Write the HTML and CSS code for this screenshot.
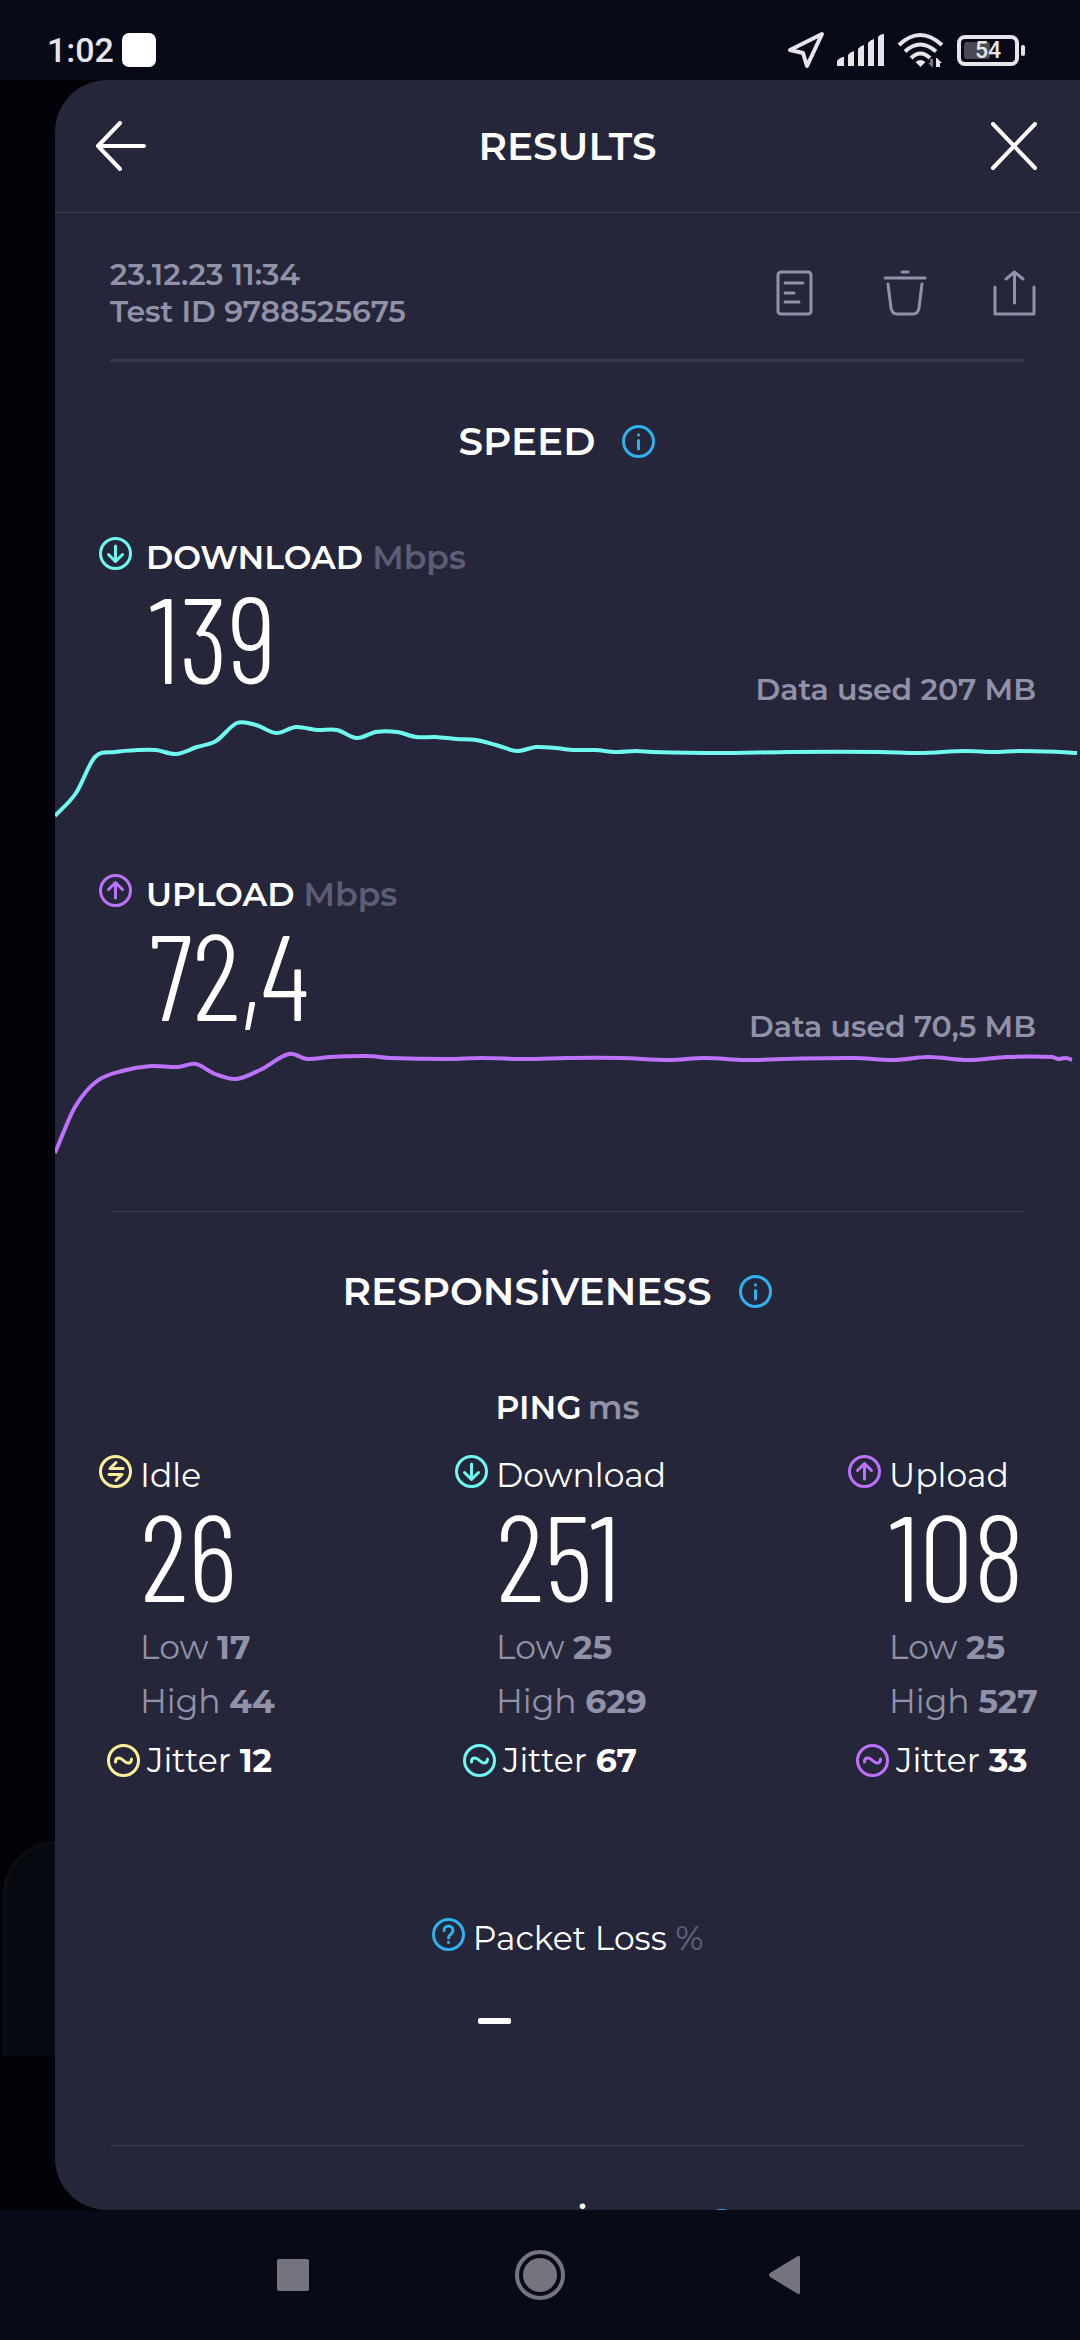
FILE: index.html
```html
<!DOCTYPE html>
<html lang="en">
  <head>
    <meta charset="UTF-8" />
    <meta name="viewport" content="width=device-width, initial-scale=1.0" />
    <title>Results</title>
    <link rel="stylesheet" href="styles.css">
  </head>
  <body>
    <svg class="sprite" aria-hidden="true">
      <symbol id="icon-down" viewBox="0 0 33 33">
        <circle cx="16.5" cy="16.5" r="15" />
        <path d="M16.5 9v15M9.5 17.5l7 7 7-7" />
      </symbol>
      <symbol id="icon-up" viewBox="0 0 33 33">
        <circle cx="16.5" cy="16.5" r="15" />
        <path d="M16.5 24V9M9.5 15.5l7-7 7 7" />
      </symbol>
      <symbol id="icon-idle" viewBox="0 0 33 33">
        <circle cx="16.5" cy="16.5" r="15" />
        <path d="M24 13.5H11l6-6M10 19.5h13l-6 6" />
      </symbol>
      <symbol id="icon-jitter" viewBox="0 0 33 33">
        <circle cx="16.5" cy="16.5" r="15" />
        <path d="M8.5 18c0-5 4.5-5 8-1.5s8 3.5 8-1.5" />
      </symbol>
      <symbol id="icon-info" viewBox="0 0 33 33">
        <circle cx="16.5" cy="16.5" r="15" />
        <path d="M16.5 15.5v8.5M16.5 9.8v.2" />
      </symbol>
      <symbol id="icon-help" viewBox="0 0 33 33">
        <circle cx="16.5" cy="16.5" r="15" />
        <path d="M12 12.5c0-6 9-6 9 0 0 4-4.5 3.5-4.5 7.5M16.5 24.2v.2" />
      </symbol>
    </svg>

    <div class="status-bar">
      <div class="status-left">
        <span class="time">1:02</span>
        <span class="notification"></span>
      </div>
      <div class="status-right">
        <svg width="38" height="38" viewBox="0 0 38 38" fill="none" stroke="#e6e6ea" stroke-width="4" stroke-linejoin="round"><path d="M35 3L3 19l13 3 4 13z" /></svg>
        <svg width="48" height="32" viewBox="0 0 48 32" fill="#e6e6ea">
          <path d="M0 32v-5q3-4 7-4v9zM11 32V21q2-3 6-4v15zM21 32V15q2-3 6-4v21zM31 32V9q2-3 6-4v27zM41 32V3q2-3 6-3v32z" />
        </svg>
        <svg width="48" height="36" viewBox="0 0 48 36" fill="none" stroke="#e6e6ea" stroke-width="4">
          <path d="M2 13q21-20 43 0M8 19.5q15-14 31 0M14 26q9.5-9 19 0" />
          <path d="M18.5 30q5-4 10 0l-5 5z" fill="#e6e6ea" stroke="none" />
          <path d="M36 27v8h-1l-4-4h2v-4z" fill="#77777f" stroke="none" />
          <path d="M39 35v-9h1l5 5h-2v4z" fill="#e6e6ea" stroke="none" />
        </svg>
        <span class="battery"><span class="battery-level" style="width: 54%"></span><span class="battery-text">54</span></span>
      </div>
    </div>

    <div class="stage">
      <div class="behind-card"></div>
      <main class="sheet">
        <header class="sheet-header">
          <button type="button" class="icon-btn" aria-label="Back">
            <svg width="50" height="50" viewBox="0 0 50 50" class="line-white"><path d="M24 2L2 25l22 23M2 25h46" /></svg>
          </button>
          <h1>RESULTS</h1>
          <button type="button" class="icon-btn" aria-label="Close">
            <svg width="46" height="48" viewBox="0 0 46 48" class="line-white"><path d="M2 2l42 44M44 2L2 46" /></svg>
          </button>
        </header>

        <section class="meta">
          <div class="meta-text">
            <div>23.12.23 11:34</div>
            <div>Test ID 9788525675</div>
          </div>
          <div class="meta-actions">
            <button type="button" class="icon-btn" aria-label="Details">
              <svg width="44" height="46" viewBox="0 0 44 46" class="line-muted"><rect x="5" y="2" width="33" height="42" rx="3" /><path d="M12 13h18M12 23h9M12 32h14" /></svg>
            </button>
            <button type="button" class="icon-btn" aria-label="Delete">
              <svg width="44" height="46" viewBox="0 0 44 46" class="line-muted"><path d="M19 2h6M2 8h40M5 14l3 24q1 6 6 6h16q5 0 6-6l3-24" /></svg>
            </button>
            <button type="button" class="icon-btn" aria-label="Share">
              <svg width="44" height="46" viewBox="0 0 44 46" class="line-muted"><path d="M2 17v27h39V17M21.5 33V2M13 9l8.5-7 8.5 7" /></svg>
            </button>
          </div>
        </section>
        <hr class="thick">

        <h2>SPEED <svg class="icon info"><use href="#icon-info" /></svg></h2>

        <section class="metric download">
          <div class="metric-title">
            <svg class="icon"><use href="#icon-down" /></svg>
            <h3>DOWNLOAD <span class="unit">Mbps</span></h3>
          </div>
          <div class="metric-row">
            <span class="value">139</span>
            <span class="data-used">Data used 207 MB</span>
          </div>
          <svg class="chart" viewBox="0 0 1025 120" preserveAspectRatio="none"><path id="download-line" /></svg>
        </section>

        <section class="metric upload">
          <div class="metric-title">
            <svg class="icon"><use href="#icon-up" /></svg>
            <h3>UPLOAD <span class="unit">Mbps</span></h3>
          </div>
          <div class="metric-row">
            <span class="value">72,4</span>
            <span class="data-used">Data used 70,5 MB</span>
          </div>
          <svg class="chart" viewBox="0 0 1025 120" preserveAspectRatio="none"><path id="upload-line" /></svg>
        </section>
        <hr>

        <h2>RESPONSİVENESS <svg class="icon info"><use href="#icon-info" /></svg></h2>

        <h3 class="ping-title">PING<span class="ms">ms</span></h3>
        <section class="ping">
          <div class="ping-col idle">
            <div class="ping-label"><svg class="icon"><use href="#icon-idle" /></svg>Idle</div>
            <div class="value">26</div>
            <div class="range">Low <b>17</b></div>
            <div class="range">High <b>44</b></div>
            <div class="jitter"><svg class="icon"><use href="#icon-jitter" /></svg><span>Jitter <b>12</b></span></div>
          </div>
          <div class="ping-col download">
            <div class="ping-label"><svg class="icon"><use href="#icon-down" /></svg>Download</div>
            <div class="value">251</div>
            <div class="range">Low <b>25</b></div>
            <div class="range">High <b>629</b></div>
            <div class="jitter"><svg class="icon"><use href="#icon-jitter" /></svg><span>Jitter <b>67</b></span></div>
          </div>
          <div class="ping-col upload">
            <div class="ping-label"><svg class="icon"><use href="#icon-up" /></svg>Upload</div>
            <div class="value">108</div>
            <div class="range">Low <b>25</b></div>
            <div class="range">High <b>527</b></div>
            <div class="jitter"><svg class="icon"><use href="#icon-jitter" /></svg><span>Jitter <b>33</b></span></div>
          </div>
        </section>

        <section class="packet-loss">
          <div class="ping-label"><svg class="icon info"><use href="#icon-help" /></svg><span>Packet Loss <span class="unit">%</span></span></div>
          <div class="no-value"></div>
        </section>
        <hr>

        <h2>CONNECTİONS <svg class="icon info"><use href="#icon-info" /></svg></h2>
      </main>
    </div>

    <nav class="nav-bar">
      <button type="button" class="icon-btn" aria-label="Recent apps">
        <svg width="50" height="50" viewBox="0 0 50 50"><rect x="9" y="9" width="32" height="32" rx="2" /></svg>
      </button>
      <button type="button" class="icon-btn" aria-label="Home">
        <svg width="50" height="50" viewBox="0 0 50 50"><circle cx="25" cy="25" r="17" /><circle cx="25" cy="25" r="23" fill="none" stroke="#74747d" stroke-width="4" /></svg>
      </button>
      <button type="button" class="icon-btn" aria-label="Go back">
        <svg width="50" height="50" viewBox="0 0 50 50"><path d="M36 6q2-1 2 2v34q0 3-2 2L8 27q-2-2 0-4z" /></svg>
      </button>
    </nav>

    <script src="script.js"></script>
  </body>
</html>
```
FILE: styles.css
```css
* {
  box-sizing: border-box;
}
body {
  margin: 0;
  height: 100vh;
  display: flex;
  flex-direction: column;
  background: #080a18;
  color: #fff;
  font-family: Montserrat, Inter, sans-serif;
  font-size: 33px;
  line-height: 40px;
}
h1,
h2,
h3 {
  margin: 0;
  font-weight: 600;
}
.sprite {
  display: none;
}
.icon-btn {
  display: flex;
  padding: 0;
  border: 0;
  background: none;
}

/* status bar */
.status-bar {
  flex: none;
  height: 80px;
  padding: 20px 55px 0 47px;
  display: flex;
  justify-content: space-between;
  align-items: center;
}
.status-left,
.status-right {
  display: flex;
  align-items: center;
}
.status-left {
  gap: 8px;
}
.status-right {
  gap: 12px;
}
.time {
  font-family: Roboto, sans-serif;
  font-size: 34px;
  font-weight: 500;
  color: #e6e6ea;
}
.notification {
  width: 34px;
  height: 34px;
  border-radius: 7px;
  background: #fff;
}
.battery {
  position: relative;
  width: 62px;
  height: 31px;
  padding: 3px;
  border: 4px solid #e6e6ea;
  border-radius: 8px;
  margin-right: 6px;
}
.battery::after {
  content: "";
  position: absolute;
  right: -10px;
  top: 6px;
  width: 4px;
  height: 11px;
  border-radius: 2px;
  background: #e6e6ea;
}
.battery-level {
  display: block;
  height: 100%;
  border-radius: 3px;
  background: #4a4a54;
}
.battery-text {
  position: absolute;
  inset: 0;
  text-align: center;
  font-family: Roboto, sans-serif;
  font-size: 23px;
  font-weight: 500;
  line-height: 24px;
  color: #e6e6ea;
}

/* results sheet */
.stage {
  position: relative;
  flex: 1;
  min-height: 0;
  padding-left: 55px;
  background: #020308;
}
.behind-card {
  position: absolute;
  left: 3px;
  bottom: 154px;
  width: 104px;
  height: 215px;
  border: 3px solid #0d0e12;
  border-bottom: 0;
  border-radius: 54px 0 0 0;
  background: #070911;
}
.sheet {
  position: relative;
  height: 100%;
  overflow: hidden;
  border-radius: 52px 0 0 52px;
  background: #25263a;
}
.sheet-header {
  display: grid;
  grid-template-columns: 50px 1fr 50px;
  align-items: center;
  justify-items: center;
  height: 133px;
  padding: 0 41px;
  border-bottom: 1px solid #38394e;
}
h1,
h2 {
  font-size: 39px;
  line-height: 48px;
}
.line-white,
.line-muted {
  fill: none;
  stroke: #fff;
  stroke-width: 4;
  stroke-linecap: round;
  stroke-linejoin: round;
}
.line-muted {
  stroke: #9192a8;
  stroke-width: 3;
}
.meta {
  display: flex;
  justify-content: space-between;
  align-items: center;
  padding: 43px 43px 29px 55px;
  color: #9192a8;
}
.meta-text,
.data-used {
  font-size: 30px;
  font-weight: 600;
  line-height: 37px;
}
.meta-actions {
  display: flex;
  gap: 66px;
}
hr {
  height: 1px;
  margin: 0 55px;
  border: 0;
  background: #38394e;
}
hr.thick {
  height: 3px;
}
h2 {
  display: flex;
  justify-content: center;
  align-items: center;
  gap: 27px;
  margin-top: 55px;
  padding-right: 21px;
}
h3 {
  font-size: 33px;
}
.icon {
  flex: none;
  width: 33px;
  height: 33px;
  fill: none;
  stroke: currentColor;
  stroke-width: 3;
  stroke-linecap: round;
  stroke-linejoin: round;
}
.download .icon {
  color: #6ff9ef;
}
.upload .icon {
  color: #bc72fb;
}
.idle .icon {
  color: #fdf09a;
}
.icon.info {
  color: #2fb1ee;
}
.unit {
  color: #5d5e74;
}

/* speed */
.metric {
  margin-bottom: 46px;
}
h2 + .metric {
  margin-top: 72px;
}
.metric-title {
  display: flex;
  gap: 14px;
  padding-left: 44px;
}
.metric-row {
  display: flex;
  justify-content: space-between;
  align-items: flex-end;
  margin-top: 14px;
  padding: 0 44px 0 94px;
}
.metric-row .value {
  padding-bottom: 29px;
}
.value {
  font-family: "Barlow Condensed", "Roboto Condensed", sans-serif;
  font-size: 122px;
  font-weight: 300;
  line-height: 88px;
}
.data-used {
  color: #9192a8;
}
.chart {
  display: block;
  width: 100%;
  height: 120px;
  fill: none;
  stroke-width: 4;
}
.download .chart {
  stroke: #6ff9ef;
}
.upload .chart {
  stroke: #bc72fb;
}

/* responsiveness */
.ping-title {
  display: flex;
  justify-content: center;
  gap: 6px;
  margin-top: 72px;
}
.ms {
  color: #9192a8;
}
.ping {
  display: grid;
  grid-template-columns: minmax(0, 356fr) minmax(0, 393fr) minmax(0, 188fr);
  margin-top: 28px;
  padding: 0 44px;
}
.ping-label {
  display: flex;
  gap: 8px;
}
.ping-col .value {
  margin: 14px 0 23px;
  padding-left: 41px;
}
.range {
  padding-left: 41px;
  line-height: 54px;
  white-space: nowrap;
  color: #9192a8;
}
.jitter {
  display: flex;
  align-items: center;
  gap: 7px;
  margin-top: 12px;
  padding-left: 8px;
  white-space: nowrap;
}
.packet-loss {
  width: fit-content;
  margin: 138px auto 121px;
}
.packet-loss .unit {
  font-weight: 500;
}
.no-value {
  width: 33px;
  height: 6px;
  margin: 60px 0 0 46px;
  border-radius: 2px;
  background: #fff;
}

/* navigation bar */
.nav-bar {
  flex: none;
  height: 130px;
  display: flex;
  justify-content: center;
  align-items: center;
  gap: 197px;
}
.nav-bar svg {
  fill: #74747d;
}
```
FILE: script.js
```js
const downloadPoints = [
  [0, 108], [21, 85], [40, 49], [60, 44], [83, 42], [101, 42], [121, 46],
  [142, 39], [161, 33], [182, 15], [201, 17], [221, 25], [241, 19], [262, 22],
  [282, 22], [302, 30], [321, 24], [342, 24], [361, 29], [381, 29], [401, 31],
  [421, 32], [441, 37], [462, 43], [481, 39], [500, 40], [520, 42], [540, 42],
  [561, 44], [581, 43], [597, 44], [663, 45], [735, 44], [825, 44], [865, 45],
  [910, 43], [939, 44], [965, 43], [1005, 44], [1022, 45],
];

const uploadPoints = [
  [0, 108], [20, 62], [42, 36], [67, 26], [96, 21], [123, 22], [141, 19],
  [160, 29], [181, 34], [205, 25], [234, 9], [252, 14], [275, 12], [312, 11],
  [336, 13], [393, 14], [426, 13], [471, 14], [512, 13], [565, 13], [614, 15],
  [650, 13], [690, 15], [728, 14], [798, 13], [840, 15], [873, 12], [913, 15],
  [952, 12], [997, 12], [1003, 14], [1011, 13], [1017, 15],
];

// Smooth curve through all points
function linePath(points) {
  let d = `M${points[0]}`;
  for (let i = 0; i < points.length - 1; i++) {
    const p0 = points[i - 1] || points[i];
    const p1 = points[i];
    const p2 = points[i + 1];
    const p3 = points[i + 2] || p2;
    // keep handles inside the segment when neighbours are far apart
    const dx = (p2[0] - p1[0]) / 3;
    const s1 = (p2[1] - p0[1]) / (p2[0] - p0[0]);
    const s2 = (p3[1] - p1[1]) / (p3[0] - p1[0]);
    d += `C${p1[0] + dx},${p1[1] + s1 * dx} ${p2[0] - dx},${p2[1] - s2 * dx} ${p2}`;
  }
  return d;
}

document.getElementById("download-line").setAttribute("d", linePath(downloadPoints));
document.getElementById("upload-line").setAttribute("d", linePath(uploadPoints));
```
